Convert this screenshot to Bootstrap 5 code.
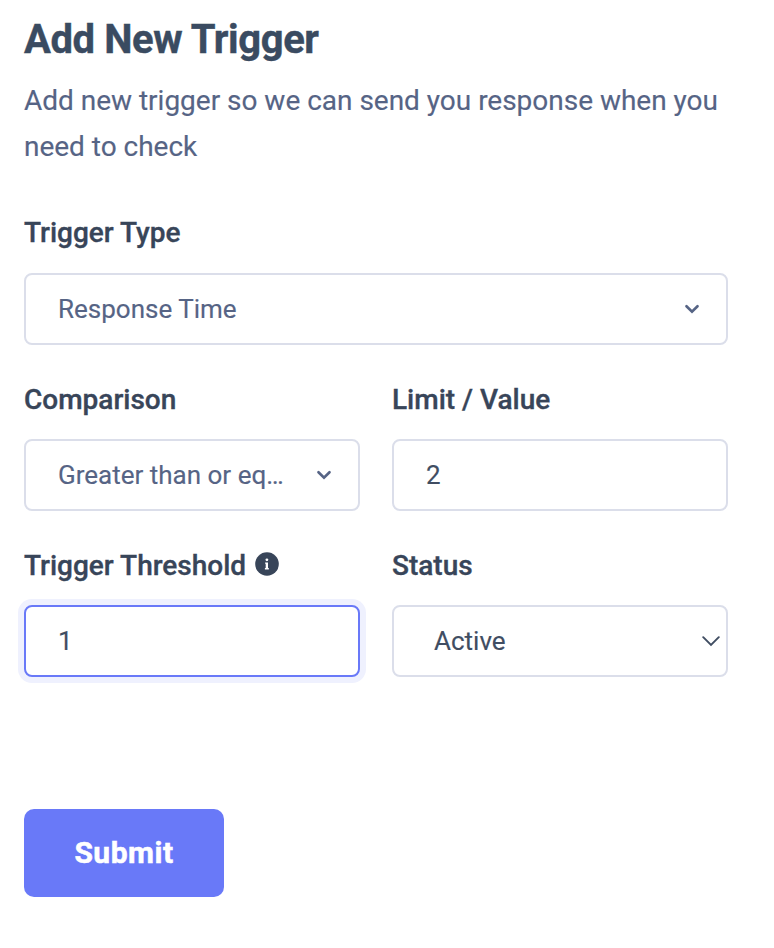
<!DOCTYPE html>
<html lang="en">
<head>
<meta charset="utf-8">
<meta name="viewport" content="width=device-width, initial-scale=1">
<title>Add New Trigger</title>
<link href="https://cdn.jsdelivr.net/npm/bootstrap@5.3.0/dist/css/bootstrap.min.css" rel="stylesheet">
<style>
body{font-family:Roboto,sans-serif;color:#364a63;background:#fff}
.trigger-form{padding:17px 46px 0 24px}
.page-title{font-size:40px;line-height:46px;font-weight:700;letter-spacing:-.4px;color:#3a4b61;-webkit-text-stroke:.4px}
.intro{font-size:28px;line-height:46px;letter-spacing:-.015px;color:#566485;margin-top:15px;-webkit-text-stroke:.15px}
.field-label{display:flex;align-items:center;font-size:28px;line-height:36px;font-weight:500;color:#384559;margin-bottom:21px;-webkit-text-stroke:.35px}
.col-12>.field-label{margin-bottom:22px}
.info-icon{margin:-4px 0 0 8px}
.field-box{height:72px;border:2px solid #dbdeea;border-radius:8px;padding:0 32px;font-size:26px;line-height:68px;color:#404d62;background:#fff;box-shadow:none;-webkit-text-stroke:.15px}
.field-box:focus,.field-box.active-field{border-color:#6979f8;box-shadow:0 0 0 6px #eff1fe}
.picker{color:#566485;padding-right:26px}
.native{padding:0 6px 0 40px}
.fields{--bs-gutter-x:32px;--bs-gutter-y:0;margin-top:45px}
.fields>div{margin-bottom:37px}
.submit-btn,.submit-btn:hover{width:200px;height:88px;margin-top:95px;border:0;border-radius:10px;background:#6979f8;color:#fff;font-size:30px;font-weight:700;letter-spacing:.5px;padding:0 0 2px;-webkit-text-stroke:.5px}
</style>
</head>
<body>
<form class="trigger-form">
<h1 class="page-title mb-0">Add New Trigger</h1>
<p class="intro mb-0">Add new trigger so we can send you response when you need to check</p>
<div class="row fields">
<div class="col-12"><label class="field-label">Trigger Type</label>
<div class="field-box picker d-flex align-items-center justify-content-between"><span>Response Time</span><svg width="16" height="12" viewBox="0 0 16 12" fill="none" stroke="#566485" stroke-width="2.7" stroke-linecap="round"><path d="M2.5 3.3L8 8.6l5.5-5.3"/></svg></div></div>
<div class="col-6"><label class="field-label">Comparison</label>
<div class="field-box picker d-flex align-items-center justify-content-between"><span>Greater than or eq…</span><svg width="16" height="12" viewBox="0 0 16 12" fill="none" stroke="#566485" stroke-width="2.7" stroke-linecap="round"><path d="M2.5 3.3L8 8.6l5.5-5.3"/></svg></div></div>
<div class="col-6"><label class="field-label" for="limit">Limit / Value</label><input id="limit" class="form-control field-box" value="2"></div>
<div class="col-6"><label class="field-label" for="threshold">Trigger Threshold<svg class="info-icon" width="26" height="26" viewBox="0 0 26 26"><circle cx="13" cy="13" r="11.8" fill="#384559"/><path d="M11.1 11.4h2.9v5.6h.8v1.4h-3.9V17h.8v-4.2h-.6z" fill="#fff"/><circle cx="12.9" cy="8.8" r="1.4" fill="#fff"/></svg></label><input id="threshold" class="form-control field-box active-field" value="1"></div>
<div class="col-6"><label class="field-label">Status</label><div class="field-box native d-flex align-items-center justify-content-between"><span>Active</span><svg width="18" height="12" viewBox="0 0 18 12" fill="none" stroke="#404d62" stroke-width="1.9" stroke-linecap="round"><path d="M1.2 2.2L9 10l7.8-7.8"/></svg></div></div>
</div>
<button type="button" class="btn submit-btn">Submit</button>
</form>
<script src="https://cdn.jsdelivr.net/npm/bootstrap@5.3.0/dist/js/bootstrap.bundle.min.js"></script>
</body>
</html>
